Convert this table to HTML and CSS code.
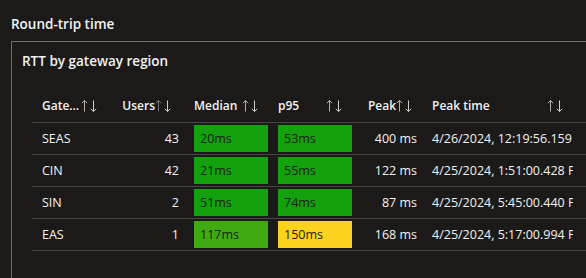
FILE: index.html
```html
<!DOCTYPE html>
<html>
<head>
<meta charset="utf-8">
<link rel="stylesheet" href="styles.css">
</head>
<body>
<h2 class="title">Round-trip time</h2>
<section class="panel">
  <h3 class="panel-title">RTT by gateway region</h3>
  <div class="grid">
    <div class="row head">
      <div class="hc pr12"><span class="lbl">Gateway</span><svg class="sort" viewBox="0 0 17 14" width="17" height="14"><path class="up" d="M3.5 12.5V1.5M0.8 4.2L3.5 1.5L6.2 4.2"/><path class="dn" d="M12.5 1.5V12.5M9.8 9.8L12.5 12.5L15.2 9.8"/></svg></div>
      <div class="hc pr12 num"><span class="lbl">Users</span><svg class="sort" viewBox="0 0 17 14" width="17" height="14"><path class="up dim" d="M3.5 12.5V1.5M0.8 4.2L3.5 1.5L6.2 4.2"/><path class="dn" d="M12.5 1.5V12.5M9.8 9.8L12.5 12.5L15.2 9.8"/></svg></div>
      <div class="hc"><span class="lbl">Median</span><svg class="sort" viewBox="0 0 17 14" width="17" height="14"><path class="up" d="M3.5 12.5V1.5M0.8 4.2L3.5 1.5L6.2 4.2"/><path class="dn" d="M12.5 1.5V12.5M9.8 9.8L12.5 12.5L15.2 9.8"/></svg></div>
      <div class="hc"><span class="lbl">p95</span><svg class="sort" viewBox="0 0 17 14" width="17" height="14"><path class="up" d="M3.5 12.5V1.5M0.8 4.2L3.5 1.5L6.2 4.2"/><path class="dn" d="M12.5 1.5V12.5M9.8 9.8L12.5 12.5L15.2 9.8"/></svg></div>
      <div class="hc num"><span class="lbl">Peak</span><svg class="sort" viewBox="0 0 17 14" width="17" height="14"><path class="up" d="M3.5 12.5V1.5M0.8 4.2L3.5 1.5L6.2 4.2"/><path class="dn" d="M12.5 1.5V12.5M9.8 9.8L12.5 12.5L15.2 9.8"/></svg></div>
      <div class="hc"><span class="lbl">Peak time</span><svg class="sort" viewBox="0 0 17 14" width="17" height="14"><path class="up" d="M3.5 12.5V1.5M0.8 4.2L3.5 1.5L6.2 4.2"/><path class="dn" d="M12.5 1.5V12.5M9.8 9.8L12.5 12.5L15.2 9.8"/></svg></div>
      <div></div>
    </div>
    <div class="row">
      <div class="c txt">SEAS</div>
      <div class="c numc">43</div>
      <div class="c box-cell"><div class="box green">20ms</div></div>
      <div class="c box-cell"><div class="box green">53ms</div></div>
      <div class="c numc">400 ms</div>
      <div class="c time"><span class="clip">4/26/2024, 12:19:56.159 PM</span></div>
      <div></div>
    </div>
    <div class="row">
      <div class="c txt">CIN</div>
      <div class="c numc">42</div>
      <div class="c box-cell"><div class="box green">21ms</div></div>
      <div class="c box-cell"><div class="box green">55ms</div></div>
      <div class="c numc">122 ms</div>
      <div class="c time"><span class="clip">4/25/2024, 1:51:00.428 PM</span></div>
      <div></div>
    </div>
    <div class="row">
      <div class="c txt">SIN</div>
      <div class="c numc">2</div>
      <div class="c box-cell"><div class="box green">51ms</div></div>
      <div class="c box-cell"><div class="box green">74ms</div></div>
      <div class="c numc">87 ms</div>
      <div class="c time"><span class="clip">4/25/2024, 5:45:00.440 PM</span></div>
      <div></div>
    </div>
    <div class="row">
      <div class="c txt">EAS</div>
      <div class="c numc">1</div>
      <div class="c box-cell"><div class="box lime">117ms</div></div>
      <div class="c box-cell"><div class="box yellow">150ms</div></div>
      <div class="c numc">168 ms</div>
      <div class="c time"><span class="clip">4/25/2024, 5:17:00.994 PM</span></div>
      <div></div>
    </div>
  </div>
</section>
</body>
</html>
```
FILE: styles.css
```css
html, body {
  margin: 0;
  padding: 0;
  background: #1b1a19;
  color: #f3f2f1;
  font-family: "Open Sans", "Noto Sans", sans-serif;
  overflow: hidden;
  height: 278px;
}
.title {
  margin: 0 0 8px 0;
  padding: 15px 0 0 11px;
  font-size: 13.5px;
  line-height: 18px;
  font-weight: 600;
}
.panel {
  margin-left: 11px;
  border-top: 1px solid #6f6e6d;
  border-left: 1px solid #6f6e6d;
  padding: 10px 0 0 10px;
  height: 226px;
}
.panel-title {
  margin: 0;
  font-size: 13.5px;
  line-height: 18px;
  font-weight: 600;
}
.grid {
  margin: 21px 0 0 10px;
  font-size: 12.5px;
}
.row {
  display: grid;
  grid-template-columns: 78px 74px 84px 84px 70px 151px 1fr;
  height: 31px;
  border-bottom: 1px solid #484644;
}
.head {
  font-weight: 600;
  font-size: 12px;
}
.hc {
  display: flex;
  align-items: center;
  padding: 0 9px 2px 10px;
  min-width: 0;
}
.hc.pr12 {
  padding-right: 12px;
}
.lbl {
  flex: 1;
  min-width: 0;
  overflow: hidden;
  text-overflow: ellipsis;
  white-space: nowrap;
}
.num .lbl {
  text-align: right;
}
.sort {
  flex-shrink: 0;
  fill: none;
  stroke-width: 1;
}
.sort .up {
  stroke: #b3b0ad;
}
.sort .up.dim {
  stroke: #797775;
}
.sort .dn {
  stroke: #d2d0ce;
}
.c {
  display: flex;
  align-items: center;
  white-space: nowrap;
  min-width: 0;
}
.txt {
  padding-left: 10px;
}
.numc {
  justify-content: flex-end;
  padding-right: 5px;
}
.box-cell {
  padding-left: 10px;
}
.box {
  width: 74px;
  height: 27px;
  box-sizing: border-box;
  padding-left: 6px;
  display: flex;
  align-items: center;
  color: #1b1a19;
}
.green { background: #13a10e; }
.lime { background: #40aa12; }
.yellow { background: #fdd21d; }
.time {
  padding-left: 10px;
  overflow: hidden;
}
.clip {
  display: block;
  overflow: hidden;
  text-overflow: clip;
  white-space: nowrap;
  min-width: 0;
}
```
